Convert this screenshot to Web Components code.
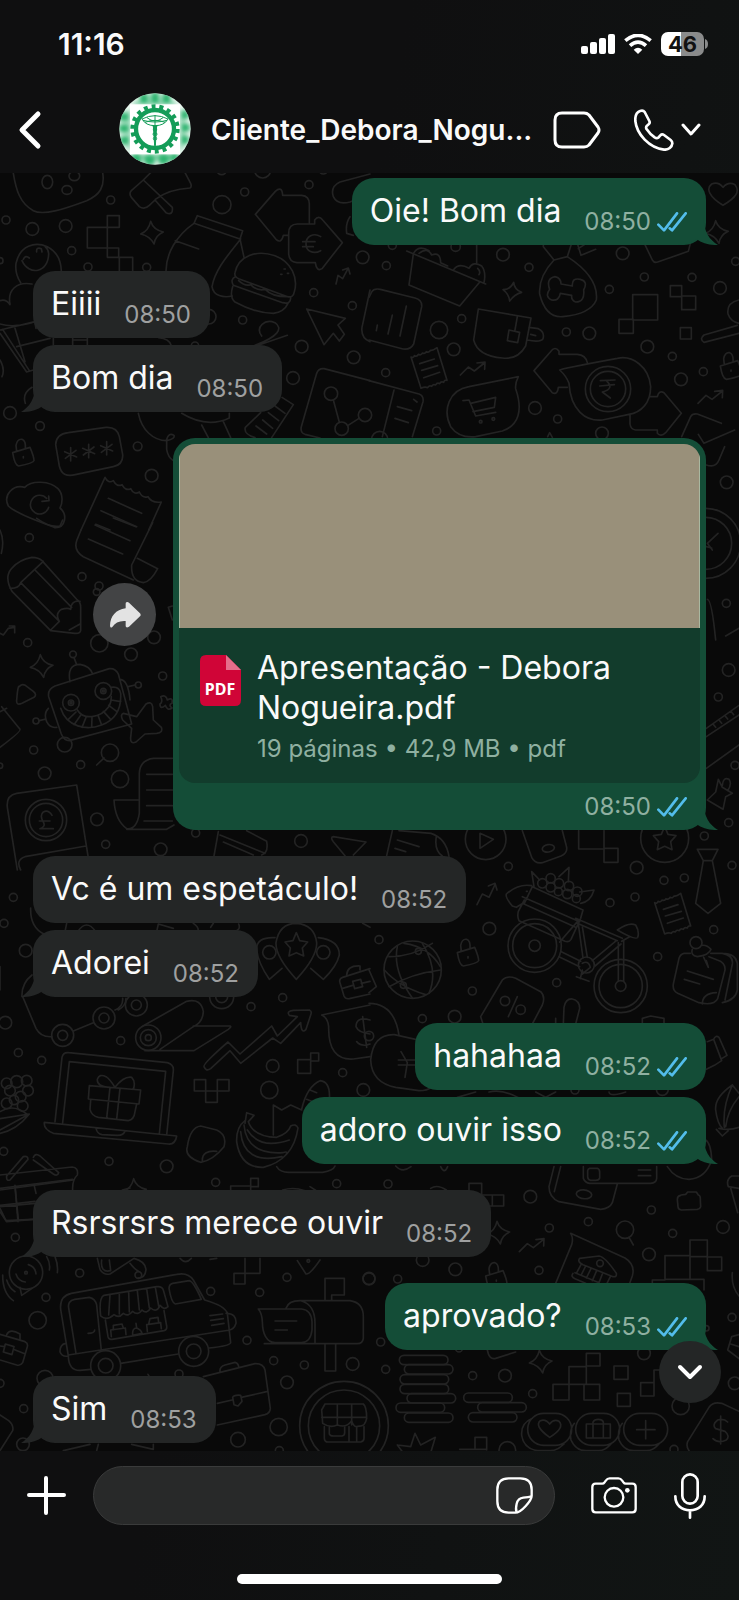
<!DOCTYPE html>
<html lang="pt-BR">
<head>
<meta charset="utf-8">
<meta name="viewport" content="width=device-width, initial-scale=1">
<title>Cliente_Debora_Nogueira</title>
<style>
  body {
    margin: 0;
    background: #090909;
    color: #fafafa;
    font-family: Inter, "Liberation Sans", sans-serif;
  }
</style>
</head>
<body>
<chat-screen>
  <status-bar slot="top" time="11:16" battery="46"></status-bar>
  <chat-header slot="top">Cliente_Debora_Nogu...</chat-header>

  <chat-message out tail time="08:50">Oie! Bom dia</chat-message>
  <chat-message first time="08:50">Eiiii</chat-message>
  <chat-message tail time="08:50">Bom dia</chat-message>
  <chat-document first time="08:50" info="19 páginas • 42,9 MB • pdf">Apresentação - Debora Nogueira.pdf</chat-document>
  <chat-message first time="08:52">Vc é um espetáculo!</chat-message>
  <chat-message tail time="08:52">Adorei</chat-message>
  <chat-message first out time="08:52">hahahaa</chat-message>
  <chat-message out tail time="08:52">adoro ouvir isso</chat-message>
  <chat-message first tail time="08:52">Rsrsrsrs merece ouvir</chat-message>
  <chat-message first out tail time="08:53">aprovado?</chat-message>
  <chat-message first tail time="08:53">Sim</chat-message>

  <chat-composer slot="bottom"></chat-composer>
</chat-screen>

<script>
// shared pieces
const resetButton = `
  button {
    display: flex;
    align-items: center;
    justify-content: center;
    margin: 0;
    padding: 0;
    border: 0;
    background: none;
    color: inherit;
    cursor: pointer;
  }
  svg { display: block; }
`

const ticks = `
  <svg width="30" height="20" viewBox="0 0 90 60" fill="none" stroke="#53bdeb" stroke-width="8" stroke-linecap="round" stroke-linejoin="round" role="img" aria-label="Lida">
    <path d="M4 38L21 55 60 4M38 49L45 55 86 4"/>
  </svg>`

const tail = `
  <svg class="tail" width="40" height="28" viewBox="0 0 120 85" preserveAspectRatio="none" fill="currentColor" aria-hidden="true">
    <path d="M77 0C77 45 95 70 120 85C95 86 72 80 55 67C40 79 22 85 0 85V0Z"/>
  </svg>`

class ChatScreen extends HTMLElement {
  constructor() {
    super()
    this.attachShadow({ mode: "open" })
    this.shadowRoot.innerHTML = `
      <style>
        :host {
          display: flex;
          flex-direction: column;
          min-height: 100vh;
          background: linear-gradient(100deg, #0f0f10 40%, #111514);
        }
        main {
          position: relative;
          flex: 1;
          background: #090909;
        }
        section {
          position: relative;
          display: flex;
          flex-direction: column;
          padding: 5px 33px 8px;
        }
        ${resetButton}
        /* floats over the last messages */
        .down {
          position: absolute;
          right: 18px;
          bottom: 48px;
          width: 62px;
          height: 62px;
          border-radius: 50%;
          background: #242626;
        }
      </style>
      <slot name="top"></slot>
      <main>
        <chat-wallpaper></chat-wallpaper>
        <section><slot></slot></section>
        <button class="down" aria-label="Ir para o fim">
          <svg width="26" height="16" viewBox="0 0 26 16" fill="none" stroke="#fff" stroke-width="4" stroke-linecap="round" stroke-linejoin="round"><path d="M3 3L13 13 23 3"/></svg>
        </button>
      </main>
      <slot name="bottom"></slot>
    `
  }
}

class StatusBar extends HTMLElement {
  constructor() {
    super()
    this.attachShadow({ mode: "open" })
    this.shadowRoot.innerHTML = `
      <style>
        :host {
          display: flex;
          align-items: center;
          justify-content: space-between;
          height: 84px;
          padding: 2px 31px 0 58px;
          font-size: 30px;
          font-weight: 600;
        }
        .icons { display: flex; align-items: center; gap: 9px; }
        .battery { display: flex; align-items: center; gap: 1px; }
        .level {
          width: 43px;
          border-radius: 7px;
          background: linear-gradient(90deg, #fff 46%, #8a8b8b 46%);
          color: #111;
          font-size: 22px;
          line-height: 24px;
          font-weight: 700;
          text-align: center;
        }
      </style>
      <span>${this.getAttribute("time")}</span>
      <div class="icons">
        <svg width="34" height="20" viewBox="0 0 34 20" fill="#fff" aria-hidden="true">
          <rect y="12" width="7" height="8" rx="2"/><rect x="9" y="8" width="7" height="12" rx="2"/><rect x="18" y="4" width="7" height="16" rx="2"/><rect x="27" width="7" height="20" rx="2"/>
        </svg>
        <svg width="28" height="20" viewBox="0 0 84 60" fill="none" stroke="#fff" stroke-width="11" aria-hidden="true">
          <path d="M4 20Q42 -12 80 20M18 35Q42 14 66 35"/>
          <path d="M42 60L29 47Q42 36 55 47Z" fill="#fff" stroke="none"/>
        </svg>
        <div class="battery">
          <div class="level">${this.getAttribute("battery")}</div>
          <svg width="3" height="10" viewBox="0 0 3 10" fill="#8a8b8b" aria-hidden="true"><path d="M0 0Q3 1 3 5Q3 9 0 10Z"/></svg>
        </div>
      </div>
    `
  }
}

class ChatHeader extends HTMLElement {
  constructor() {
    super()
    this.attachShadow({ mode: "open" })
    this.shadowRoot.innerHTML = `
      <style>
        :host {
          display: flex;
          align-items: center;
          height: 87px;
          padding: 0 38px 0 18px;
        }
        ${resetButton}
        .avatar { margin: 0 20px 2px 77px; }
        h1 {
          flex: 1;
          margin: 0;
          overflow: hidden;
          white-space: nowrap;
          font-size: 28px;
          line-height: 36px;
          font-weight: 600;
        }
        .label { margin-right: 33px; }
        .call { gap: 7px; }
      </style>
      <button aria-label="Voltar">
        <svg width="24" height="40" viewBox="0 0 24 40" fill="none" stroke="#fff" stroke-width="5" stroke-linecap="round" stroke-linejoin="round"><path d="M20 4L4 20 20 36"/></svg>
      </button>
      <svg class="avatar" width="72" height="72" viewBox="0 0 216 216" role="img" aria-label="Foto do contato">
        <defs>
          <clipPath id="round"><circle cx="108" cy="108" r="107"/></clipPath>
          <filter id="soft"><feGaussianBlur stdDeviation="6"/></filter>
        </defs>
        <g clip-path="url(#round)">
          <rect width="216" height="216" fill="#eef8f2"/>
          <g fill="#2fb46f" filter="url(#soft)">
            <ellipse cx="75" cy="16" rx="14" ry="17"/><ellipse cx="108" cy="14" rx="14" ry="18"/><ellipse cx="142" cy="16" rx="14" ry="17"/>
            <ellipse cx="52" cy="200" rx="16" ry="20"/><ellipse cx="92" cy="200" rx="18" ry="18"/><ellipse cx="134" cy="198" rx="18" ry="18"/><ellipse cx="166" cy="194" rx="12" ry="16"/>
            <ellipse cx="14" cy="72" rx="15" ry="14"/><ellipse cx="14" cy="106" rx="15" ry="14"/><ellipse cx="16" cy="142" rx="15" ry="14"/>
            <ellipse cx="198" cy="66" rx="13" ry="14"/><ellipse cx="200" cy="104" rx="13" ry="14"/><ellipse cx="198" cy="140" rx="13" ry="14"/>
            <path d="M44 27H170V33H44ZM36 186H180V192H36ZM26 50H31V170H26ZM186 50H191V170H186Z"/>
          </g>
          <rect x="33" y="34" width="150" height="150" fill="#fff"/>
          <circle cx="108" cy="108" r="57" fill="none" stroke="#149c58" stroke-width="13"/>
          <circle cx="108" cy="108" r="67" fill="none" stroke="#149c58" stroke-width="14" pathLength="180" stroke-dasharray="5 5"/>
          <g fill="none" stroke="#149c58" stroke-width="3">
            <path d="M69 78Q108 58 147 78Q136 98 108 98Q80 98 69 78ZM72 82Q108 92 144 82M78 88Q108 76 138 88M84 74Q108 94 132 74"/>
            <path d="M108 66V158M100 98Q122 108 108 116Q96 124 108 130Q118 136 108 144M116 98Q94 108 108 116Q120 124 108 130Q98 136 108 144" />
            <path d="M103 98H113L109 158H107Z" fill="#149c58"/>
          </g>
        </g>
      </svg>
      <h1><slot></slot></h1>
      <button class="label" aria-label="Etiqueta">
        <svg width="48" height="38" viewBox="0 0 48 38" fill="none" stroke="#fff" stroke-width="3" stroke-linejoin="round"><path d="M9 2H31Q34 2 36 4L45 16Q47 19 45 22L36 34Q34 36 31 36H9Q2 36 2 29V9Q2 2 9 2Z"/></svg>
      </button>
      <button class="call" aria-label="Ligar">
        <svg width="40" height="42" viewBox="0 0 120 126" fill="none" stroke="#fff" stroke-width="8" stroke-linecap="round" stroke-linejoin="round">
          <path d="M18 6C8 10 3 22 4 36C8 76 46 116 90 122C104 123 114 114 115 103Q115 97 110 93L90 78Q84 74 79 79L73 86Q68 89 62 85C52 78 43 68 37 59Q35 54 39 50L44 46Q49 42 46 36L32 9Q27 2 18 6Z"/>
        </svg>
        <svg width="20" height="13" viewBox="0 0 20 13" fill="none" stroke="#fff" stroke-width="3" stroke-linecap="round" stroke-linejoin="round"><path d="M2 2L10 11 18 2"/></svg>
      </button>
    `
  }
}

class ChatMessage extends HTMLElement {
  constructor() {
    super()
    this.attachShadow({ mode: "open" })
    const out = this.hasAttribute("out")
    this.shadowRoot.innerHTML = `
      <style>
        :host { display: flex; margin-top: 7px; }
        :host(:first-of-type) { margin-top: 0; }
        :host([first]) { margin-top: 26px; }
        :host([out]) { justify-content: flex-end; }
        .bubble {
          position: relative;
          display: flex;
          align-items: flex-end;
          gap: 23px;
          padding: 13px 19px 9px 18px;
          border-radius: 22px;
          background: #242626;
        }
        :host([out]) .bubble { background: #144d37; }
        .text {
          position: relative;
          margin-bottom: 5px;
          font-size: 32px;
          line-height: 40px;
        }
        .meta {
          position: relative;
          display: flex;
          align-items: center;
          gap: 6px;
          color: #9fa0a0;
          font-size: 24px;
          line-height: 28px;
        }
        :host([out]) .meta { color: #8fb0a1; }
        .tail {
          position: absolute;
          left: -12px;
          bottom: 0;
          color: #242626;
          transform: scaleX(-1);
        }
        :host([out]) .tail {
          left: auto;
          right: -12px;
          color: #144d37;
          transform: none;
        }
      </style>
      <div class="bubble">
        ${this.hasAttribute("tail") ? tail : ""}
        <span class="text"><slot></slot></span>
        <span class="meta"><time>${this.getAttribute("time")}</time>${out ? ticks : ""}</span>
      </div>
    `
  }
}

class ChatDocument extends HTMLElement {
  constructor() {
    super()
    this.attachShadow({ mode: "open" })
    this.shadowRoot.innerHTML = `
      <style>
        :host {
          display: flex;
          align-items: center;
          justify-content: flex-end;
          gap: 17px;
          margin-top: 26px;
        }
        ${resetButton}
        .forward {
          flex: none;
          width: 63px;
          height: 63px;
          margin-bottom: 39px;
          border-radius: 50%;
          background: #434445;
        }
        .bubble {
          position: relative;
          flex: 0 1 521px;
          padding: 6px;
          border-radius: 22px;
          background: #144d37;
        }
        .card {
          overflow: hidden;
          border-radius: 16px;
          background: #123c2c;
        }
        .preview {
          height: 184px;
          border: solid #a9b8a0;
          border-width: 0 1px;
          background: #99907a;
        }
        .file {
          display: flex;
          gap: 16px;
          padding: 20px 20px 20px 21px;
        }
        .file svg { flex: none; margin-top: 7px; }
        h2 {
          margin: 0;
          font-size: 32px;
          line-height: 40px;
          font-weight: 400;
        }
        p, .meta {
          margin: 0;
          color: #8fb0a1;
          font-size: 24px;
          line-height: 28px;
        }
        p { margin-top: 7px; }
        .meta {
          position: relative;
          display: flex;
          align-items: center;
          justify-content: flex-end;
          gap: 6px;
          padding: 10px 13px 3px;
        }
        .tail {
          position: absolute;
          right: -12px;
          bottom: 0;
          color: #144d37;
        }
      </style>
      <button class="forward" aria-label="Encaminhar">
        <svg width="32" height="28" viewBox="0 0 96 84" fill="#e3e3e3"><path d="M52 4Q56 2 60 5L93 37Q97 42 93 46L60 77Q52 82 50 76V60Q22 58 10 78Q4 83 3 74C4 46 20 26 50 22V8Q50 5 52 4Z"/></svg>
      </button>
      <div class="bubble">
        ${tail}
        <div class="card">
          <div class="preview"></div>
          <div class="file">
            <svg width="41" height="51" viewBox="0 0 41 51" role="img" aria-label="PDF">
              <path d="M6 0H26L41 15V45Q41 51 35 51H6Q0 51 0 45V6Q0 0 6 0Z" fill="#d00537"/>
              <path d="M26 0L41 15H26Z" fill="#e56e8b"/>
              <text x="20" y="40" fill="#fff" font-family="Noto Sans, sans-serif" font-size="16" font-weight="700" text-anchor="middle">PDF</text>
            </svg>
            <div>
              <h2><slot></slot></h2>
              <p>${this.getAttribute("info")}</p>
            </div>
          </div>
        </div>
        <div class="meta"><time>${this.getAttribute("time")}</time>${ticks}</div>
      </div>
    `
  }
}

class ChatComposer extends HTMLElement {
  constructor() {
    super()
    this.attachShadow({ mode: "open" })
    this.shadowRoot.innerHTML = `
      <style>
        :host { display: block; padding: 15px 0 16px; }
        ${resetButton}
        form {
          display: flex;
          align-items: center;
          padding: 0 33px 0 26px;
        }
        .field {
          display: flex;
          flex: 1;
          align-items: center;
          min-width: 0;
          height: 57px;
          margin: 0 36px 0 26px;
          padding: 0 21px 0 24px;
          border: 1px solid #3a3b3b;
          border-radius: 30px;
          background: #282929;
        }
        input {
          flex: 1;
          min-width: 0;
          padding: 0;
          border: 0;
          outline: 0;
          background: none;
          color: inherit;
          font: 32px Inter, sans-serif;
        }
        .camera { margin-right: 37px; }
        .home {
          width: 265px;
          height: 10px;
          margin: 49px auto 0;
          border-radius: 5px;
          background: #fff;
        }
      </style>
      <form>
        <button type="button" aria-label="Anexar">
          <svg width="41" height="41" viewBox="0 0 41 41" fill="none" stroke="#fff" stroke-width="4" stroke-linecap="round"><path d="M20 3V38M3 20H38"/></svg>
        </button>
        <div class="field">
          <input type="text" aria-label="Mensagem">
          <button type="button" aria-label="Figurinhas">
            <svg width="37" height="37" viewBox="0 0 111 111" fill="none" stroke="#fff" stroke-width="7" stroke-linejoin="round">
              <path d="M38 4H73Q107 4 107 38V56C107 70 76 107 58 107H38Q4 107 4 73V38Q4 4 38 4Z"/>
              <path d="M62 106Q58 96 62 80Q66 64 82 62Q98 60 107 58"/>
            </svg>
          </button>
        </div>
        <button type="button" class="camera" aria-label="Câmera">
          <svg width="46" height="37" viewBox="0 0 138 111" fill="none" stroke="#fff" stroke-width="7" stroke-linejoin="round">
            <path d="M14 20H34Q38 20 40 17L45 10Q49 4 56 4H82Q89 4 93 10L98 17Q100 20 104 20H124Q134 20 134 30V96Q134 106 124 106H14Q4 106 4 96V30Q4 20 14 20Z"/>
            <circle cx="69" cy="61" r="28"/><circle cx="109" cy="40" r="7" fill="#fff" stroke="none"/>
          </svg>
        </button>
        <button type="button" aria-label="Gravar áudio">
          <svg width="32" height="46" viewBox="0 0 96 138" fill="none" stroke="#fff" stroke-width="8" stroke-linecap="round">
            <rect x="25" y="4" width="46" height="88" rx="23"/><path d="M4 70C4 96 22 112 48 112S92 96 92 70M48 112V134"/>
          </svg>
        </button>
      </form>
      <div class="home"></div>
    `
  }
}

// Wallpaper doodles, drawn at three units per pixel.
// Each sheet: origin, circles [x, y, r], free paths, reusable stamps [name, x, y]
const sheets = [
  {
    at: [0, 510],
    circles: [[332,90,12],[734,66,12],[927,44,12],[666,104,27],[18,150,12],[97,177,19],[197,168,19],[215,242,12],[264,291,12],[440,292,12],[1088,262,19],[941,368,12],[1057,407,12],[728,450,12],[905,530,19],[1061,562,19],[879,624,19],[30,729,19],[120,768,13],[413,829,13],[455,917,19],[788,0,24],[0,272,9],[585,527,11],[993,671,20],[1025,776,20],[1095,735,20],[665,0,14],[970,0,12],[626,440,22]],
    stamps: [["sparkle",456,188],["ast",212,853],["ast",266,843],["ast",320,835],["lock",70,850]],
    paths: `M40 10C48 60 60 100 100 122C130 138 190 118 260 92C300 75 315 50 308 8M126 36a16 20 0 1 0 32 0a16 20 0 1 0 -32 0M186 60a15 13 0 1 0 30 0a15 13 0 1 0 -30 0M207 18a16 14 0 1 0 32 0a16 14 0 1 0 -32 0
      M430 30L394 62Q386 70 394 82L418 110Q434 120 448 106L465 90 498 128Q520 138 517 112L430 30 452 8M466 88C500 62 535 56 570 54Q576 50 572 40L555 8
      M262 172H322V234H262ZM322 137H358V172H322ZM322 172V262H356V234H322M356 262H398V303M358 262V303
      M592 137L728 182 720 207 582 160ZM582 160C530 196 498 250 498 303M526 212L596 237M720 207L732 262M722 207C680 260 645 300 636 350C640 378 670 384 697 378
      M705 308C715 258 770 238 825 257C875 275 895 325 883 365Q880 384 863 380L716 326Q702 320 705 308ZM706 320Q690 328 700 346L848 398Q872 404 872 384M698 350Q688 382 705 396C745 418 785 430 820 430Q852 426 864 400M716 332Q735 350 752 344Q770 364 796 358Q815 380 862 380M842 313h4M852 297h4M862 310h4
      M766 133L826 64Q846 46 848 76H905Q928 78 928 102V158M766 133L828 208Q844 222 850 196H864M866 190Q866 162 892 162H944V150Q956 134 968 150L1027 218 966 296Q950 306 946 278H890Q868 276 866 252ZM962 200C940 186 918 200 918 222S940 254 962 242M908 215H945M908 230H940
      M1008 342L1014 316 1028 326 1044 296M1028 300L1045 294 1050 312
      M920 417L1036 445 1014 465 1033 493 1018 513 1000 490 972 524Z
      M1110 360L1086 472Q1082 504 1110 515M1110 12L1020 36Q990 50 1000 80Q1012 106 1050 96L1070 88M1050 140Q1036 160 1040 190L1060 196
      M785 498C765 470 795 446 825 458C850 475 835 500 765 526M768 528L862 496
      M1110 632L972 596Q956 594 950 610L904 770Q900 788 915 793L960 804M1000 690L1018 757M1043 767L1077 745
      M62 338Q44 310 48 280C60 226 105 214 142 230Q182 250 184 303M66 272C86 318 146 310 146 250Q144 236 134 228M70 268q6 -14 18 -4M110 246q-2 -16 14 -10l2 10M30 402C22 360 50 334 96 342M0 392Q18 386 30 404M0 462Q40 474 96 458
      M8 478L88 602M0 490L80 606 100 600M50 530L150 505M45 475L75 575M0 480L105 455M104 455L108 475M160 505V525M218 503V527M262 503V527M218 510H262M476 503Q508 506 514 527
      M0 570Q16 598 6 620M76 700Q66 670 96 652
      M205 788L318 772Q352 770 358 800L368 854Q370 884 340 890L226 914Q186 924 178 888L167 824Q168 792 205 788Z
      M415 730C425 780 460 812 500 812Q526 806 522 796Q506 786 500 808V838Q504 862 520 872M545 730Q620 776 688 744V730M605 765L625 803M670 755L692 803
      M782 728L736 772Q730 792 765 803M846 682L880 704 815 803M768 768L800 792M788 750L818 775M805 728L836 752M825 708L855 730
      M25 1008C8 975 40 942 74 952C95 930 150 932 174 956C190 972 188 1000 180 1014C204 1034 196 1074 165 1073C125 1056 55 1036 25 1008ZM140 985A28 28 0 1 0 146 1012M126 994L147 992 146 978
      M243 1080L315 922Q325 942 340 932Q350 952 366 944Q376 964 392 956Q402 976 418 966Q428 986 444 980Q454 1000 484 996L446 1080M325 985L425 1030M303 1022L410 1070M287 1063L330 1080`
  },
  {
    at: [0, 1560],
    circles: [[88,53,12],[246,170,12],[83,368,12],[298,370,26],[393,403,19],[462,352,19],[488,468,12],[194,674,22],[330,698,26],[101,690,12],[242,734,12],[134,760,19],[360,777,26],[291,898,19],[317,973,12],[482,988,19],[587,939,12],[903,963,19],[219,403,10],[415,495,9],[108,603,9],[0,737,8],[213,548,25],[213,548,8],[213,548,3],[310,513,25],[310,513,8],[310,513,3],[138,900,62],[138,900,50],[297,198,12],[290,216,10]],
    stamps: [["sparkle",125,438],["flower",498,546]],
    paths: `M243 30L230 62Q220 92 250 110L400 180M458 8L395 135Q392 184 430 188Q452 186 473 146L412 115M285 15L390 62M265 57L368 102M340 -6L408 20M0 30Q14 60 4 100M110 -5Q150 24 180 18L188 0
      M36 214Q12 172 34 146Q58 118 96 112Q116 112 126 122L232 240Q242 246 242 262V332Q240 342 224 340L152 332ZM30 205Q56 206 62 188L130 124M62 188L178 304M105 150L215 262M152 330L178 304Q164 282 184 268Q204 262 212 268Q214 240 240 244M208 330L240 312
      M0 340L10 345 25 325 42 322M28 318H44V338
      M58 500Q54 492 50 540Q48 558 66 550L102 532Q112 524 100 514L76 496Q64 490 58 500ZM5 560L60 628Q64 634 0 682M0 575L20 565
      M165 498L328 446Q346 444 355 462L395 612 208 662Q192 662 184 642L146 530Q142 508 165 498ZM210 485Q200 434 240 433Q270 438 278 462M222 413L230 434M145 565Q130 580 140 605Q150 625 170 622M118 602L138 597M360 478Q385 480 390 540M405 495L385 500
      M182 565C200 622 260 632 305 615Q366 592 362 520Q358 498 334 502M232 570C250 600 300 596 326 560Q334 548 334 530M205 598L228 576M222 614L242 586M246 622L258 592M275 622L276 592M305 615L294 586M332 598L310 574M350 574L326 556M362 545L334 540
      M370 580L410 590 438 552Q455 542 458 560L460 600 484 622Q490 638 470 640L435 642 408 666Q390 674 392 652L395 625 368 600Q360 584 370 580Z
      M312 714L290 735M517 715H460Q420 720 418 760V880Q410 930 380 926Q345 900 342 840H415M380 928H500L522 915M440 763H517M440 810H517M440 857H517M432 903H517M505 262L517 300M505 262L517 258
      M22 862Q18 826 50 820L230 795 264 1008M22 862L52 1050M62 1050Q46 1020 75 1010L258 978M156 886Q145 868 130 876Q118 886 130 906Q138 920 120 926H160M118 903H150
      M655 935L642 1008M660 945L795 1000M670 966L760 1005M740 932L800 964Q806 998 785 1005M1000 950L1098 966 1060 1005M1000 950Q990 952 1000 965L1035 1007`
  },
  {
    at: [1107, 720],
    circles: [[52,77,12],[402,44,19],[480,82,12],[761,40,19],[826,111,12],[969,112,12],[721,148,12],[1053,144,19],[1100,64,12],[278,236,12],[210,270,26],[254,328,19],[592,276,12],[661,280,19],[835,320,19],[910,349,12],[936,418,19],[1003,395,12],[50,398,12],[498,504,19],[566,537,12],[203,573,12],[699,580,19],[1073,727,19],[1072,1090,12],[717,447,68],[717,447,53],[335,545,4],[373,537,4],[1010,910,105],[1010,910,78],[32,598,24],[70,16,12],[260,20,14]],
    stamps: [["sparkleS",430,155],["receipt",180,385],["trend",310,386],["trend",1023,471],["lock",1086,380],["heart",1062,-136],["sparkle",1044,-24]],
    paths: `M113 33L350 132M133 42L120 135 272 198 333 125M135 38Q150 14 180 32M150 40Q175 20 188 45Q214 34 215 68L236 78M255 88Q270 68 300 85Q312 62 338 78Q352 96 345 128M323 10V70M326 85Q336 94 330 104
      M0 172L8 156Q14 144 34 148L138 174Q160 180 158 200L134 312Q124 330 102 327L0 300M25 255L22 272M70 225L57 282M112 198L93 288
      M328 207L486 234 470 318Q446 360 400 354Q326 348 314 300ZM445 230L438 270M420 270L452 277 446 308 415 302ZM480 262L508 266Q528 276 522 296Q514 308 475 300M485 283L500 287
      M555 60Q508 110 512 162Q530 235 582 230Q664 222 682 180Q690 112 595 50Q575 55 555 60L523 20V10M595 50L608 10M625 10L636 46 680 28M628 26L652 10
      M576 132L610 138Q608 112 634 118Q658 124 644 150Q648 186 620 186Q606 180 608 166L574 160Q570 184 548 180Q526 170 542 148Q530 116 558 110Q576 114 576 132Z
      M791 164H866V240H791ZM750 238H793V280H750ZM904 137H938V170H904ZM938 168H980V209H938ZM934 263H967V297H934Z
      M655 368Q650 345 625 343H570V334Q558 316 544 336L495 392 550 458Q566 466 568 442H595M572 390Q576 386 745 355C790 345 840 380 845 440C845 490 815 518 780 523L700 540C650 545 605 510 600 430Q592 408 572 390ZM783 525V552Q785 568 800 570H865V580Q875 592 890 578L937 520 885 458Q870 450 865 470H845M694 422L738 420M692 438L736 434M712 422Q738 446 700 456L724 474
      M448 410L300 440C240 450 220 510 245 560Q270 595 320 590L400 573C450 556 462 510 440 446Q438 430 448 410ZM282 482L300 480 320 528 380 517M305 490L380 472 376 502 312 515
      M0 422L150 462Q165 468 162 485L130 590M75 450L40 590M85 500L128 512M78 535L118 548M134 478l10 8M536 590L542 578 550 592
      M1110 180Q1072 188 1077 222Q1085 245 1110 250M1105 256L1005 285Q990 297 1005 307L1110 280M938 590L965 530Q970 520 985 522L1057 550M988 583L1005 610 1097 570M1012 675Q1040 685 1050 660L1067 620
      M1047 880L1015 910 1030 930M1012 920L1028 924M1015 1078Q1028 1078 1040 1200M1070 1188L1110 1165
      M826 10L850 60Q856 70 866 66L958 34 964 10`
  },
  {
    at: [1107, 1860],
    circles: [[1079,150,19],[1048,231,12],[1098,436,12],[1079,608,12],[1006,648,12],[1089,736,12],[803,743,19],[885,781,12],[946,774,12],[798,831,12],[723,848,12],[418,739,12],[361,926,19],[30,959,12],[866,1010,12],[1034,929,12],[310,1113,12],[563,1088,12],[160,1196,12],[257,1190,19],[887,655,72],[350,658,61],[497,977,80],[497,977,66],[497,977,17],[755,1098,80],[755,1098,65],[755,1098,16],[652,1035,24],[131,1049,86],[148,994,9],[103,1096,9],[408,1143,14],[455,1169,14],[981,968,18],[545,775,14],[520,790,14],[570,790,14],[545,802,14],[600,798,14],[625,815,14],[595,822,14],[622,836,12],[568,815,12]],
    stamps: [["star",887,655],["receipt",911,882],["lock",297,1000],["trendUp",352,822]],
    paths: `M1012 325L1110 256M1012 350L1110 285M1012 445L1110 375M1032 312l8 10M1050 300l8 10M1068 287l8 10M1086 274l8 10
      M1015 540L1062 568Q1068 540 1070 530L1090 520 1060 502 1048 478 1040 516 1015 540M1060 496Q1062 470 1080 478Q1090 492 1076 512M333 640V685L373 658Z
      M70 632L53 707M90 632L186 640Q232 655 240 710M85 660L150 680M78 685L110 695M202 650Q195 690 220 708
      M460 632L488 712Q498 732 520 728L576 708Q598 698 592 678L580 632M520 688a18 11 -10 1 0 36 -6a18 11 -10 1 0 -36 6M629 632V687H705M705 632V727H747V685H705
      M985 688H1047L1030 722H1003ZM1003 722L980 850 1017 880 1055 850 1030 722
      M572 966L625 905M577 995L635 1024M570 1010L632 1040M620 895L760 955M625 910L745 962M748 968V1084M764 960V1084M640 920L655 1012M628 912L642 1014M742 962L670 1022M756 972L678 1038M640 1030Q660 1020 664 1042L640 1062M622 1070L660 1084M640 1050L634 1076
      M745 930Q780 905 800 915Q812 935 806 952Q800 962 745 930ZM782 950L758 964M490 800L642 870 635 895 606 958Q600 968 588 964L450 902Q444 890 448 874L466 840M460 830L632 905M460 850L620 922M490 800L466 850M488 797Q448 790 412 822Q408 832 430 858L442 862 468 846M472 814h3M495 800L488 755 512 780M570 770L600 742 598 785M632 816L675 810Q665 845 635 850
      M60 1010Q130 1010 190 970M60 1100Q130 1060 215 1050M85 980Q70 1050 130 1134M160 970Q210 1050 180 1120M46 1050Q90 1100 170 1124M105 970Q180 980 214 1040
      M335 1190L400 1080Q415 1065 440 1075L515 1115Q530 1130 520 1155L490 1212M335 1190L342 1212M445 1130L418 1190
      M964 1000H945Q934 1002 930 1015L913 1092Q910 1112 926 1120L990 1148Q1035 1158 1046 1136L1068 1050Q1070 1028 1045 1020L1020 1010M1025 1000H1060Q1094 1006 1090 1032L1068 1140M1060 1148Q1100 1140 1105 1110V1030Q1100 1000 1060 1000M955 1053L1033 1078M946 1078L992 1092M1000 1152Q1000 1120 1042 1118M970 988Q964 1006 985 1010Q1020 1006 1026 988Q1014 974 998 976M1004 1012L1018 1042 1012 1022
      M583 1212L585 1162Q590 1135 610 1137Q632 1142 632 1165L620 1212M560 1195V1212M820 1212V1195L845 1188 885 1195V1212M0 1150Q76 1150 90 1246M0 1050L22 1100 0 1118`
  },
  {
    at: [0, 2520],
    circles: [[40,172,12],[12,250,12],[77,332,19],[16,548,19],[55,638,12],[125,661,12],[362,602,12],[753,500,12],[848,473,12],[818,678,19],[808,750,26],[1028,698,12],[1090,750,19],[11,934,12],[327,964,12],[500,979,19],[647,1027,12],[1010,1031,12],[188,586,33],[188,586,15],[312,534,33],[312,534,15],[409,495,33],[409,495,15],[665,470,36],[665,470,18],[445,593,38],[445,593,24],[445,593,9],[808,337,20],[970,337,20],[50,725,18],[80,722,16],[20,730,16],[30,752,16],[84,752,16],[62,770,16],[20,790,16],[68,798,16],[42,780,14]],
    stamps: [["star",889,314],["sparkle",405,1050]],
    paths: `M66 470Q64 430 96 405M68 470L108 565Q122 592 155 590M220 573L280 548M345 510Q370 500 368 475M355 510Q378 498 378 475
      M425 560L560 484Q604 474 610 515Q608 548 580 560L480 628M580 558H690Q696 560 685 568L582 632H435
      M612 680Q608 672 684 606L720 642 815 558 832 588 892 530 868 526Q858 514 880 511L928 510Q936 514 933 522L918 568Q904 584 902 548L842 610 818 594 722 670 690 632 632 686Q618 696 612 680Z
      M965 525L1110 495M965 525Q984 534 986 560Q984 662 1060 657L1110 650M1110 540Q1068 528 1068 560Q1075 578 1110 582M1070 605Q1085 622 1110 612M1088 530L1100 622
      M889 418Q826 350 828 308Q838 250 889 250Q944 254 950 308Q952 350 889 418ZM825 293Q768 290 770 330Q775 370 808 418L846 385M955 293Q1018 300 1018 345Q1010 380 970 418L932 385
      M1110 386L1028 412Q1016 416 1020 428L1032 468Q1036 478 1048 476L1110 462M1028 445L1058 436M1084 430L1110 424M1040 405Q1042 376 1080 378V390M1058 424l24 -6 6 22 -24 6z
      M165 845L186 652Q190 636 206 638L502 668Q522 674 520 692L500 885M188 848L208 665 497 694 478 882M133 847L530 888Q526 914 505 912L160 880Q130 868 133 847ZM288 865Q292 882 306 884L352 886Q372 886 375 873
      M268 737L422 750 417 792 265 777ZM330 742L320 835M360 745L350 838M272 780L270 808Q275 828 295 832L385 842Q402 840 405 815L410 792M330 742Q290 740 292 718Q298 700 318 710Q330 718 345 742Q372 708 395 712Q408 725 400 748
      M583 719H617V753H583ZM652 719H687V753H652ZM617 753H652V787H617ZM893 659H932V700H893ZM932 639H956V663H932Z
      M602 858L650 870Q682 884 672 920Q640 960 602 967Q552 950 562 920Q570 862 602 858ZM607 962Q606 930 650 934
      M735 850L740 818 762 826 745 845Q760 890 830 892Q865 880 872 858Q888 850 894 864Q880 960 790 982Q722 984 710 906Q708 862 735 842M732 855Q740 945 848 938Q866 932 858 944M722 875Q730 975 846 950M742 870Q780 930 868 900
      M905 808Q920 740 960 722Q992 725 988 778M820 885V795L845 810 872 795 905 810M930 750l20 8M920 778l20 8M830 980Q840 998 870 997H968Q1000 992 1005 978
      M0 1005L216 981Q236 982 232 1005Q216 1020 218 1052M0 1045L218 1018M20 1008L70 950Q84 946 84 958L30 1020Q18 1024 20 1008M100 952Q106 938 120 948L176 998Q172 1010 160 1002L100 960M45 1040L54 1145M102 1034L108 1060M0 1100L105 1090M0 1115L20 1145 100 1138
      M0 836L88 822Q50 870 0 880M0 870L84 824M0 815Q40 790 80 822
      M692 1053V1038H752V1015H775V1040H752V1053M848 1050Q880 1040 915 1052M930 1040L950 1053M367 1050L390 1044
      M92 204Q90 262 132 282M200 250L195 275M235 272Q260 238 285 272M470 275L475 252 520 265M580 250Q598 262 594 275M632 262L640 250M716 252Q724 270 700 275M0 380V450M1088 250L1110 262`
  },
  {
    at: [0, 3540],
    circles: [[46,172,12],[239,279,12],[138,352,12],[113,421,26],[632,334,12],[779,337,12],[861,292,12],[741,481,12],[821,542,12],[913,555,12],[1058,552,19],[861,607,19],[836,741,26],[714,779,22],[71,686,12],[69,793,19],[135,595,24],[0,610,12],[537,582,12],[1107,297,18],[838,812,12],[78,278,50],[78,278,4],[317,557,45],[317,557,22],[581,514,45],[581,514,22],[1032,737,133],[1032,737,107],[925,243,4],[415,285,10]],
    stamps: [],
    paths: `M60 322L65 346 96 325M8 285Q8 340 40 362M20 300Q28 325 45 335M140 230Q152 250 148 270M165 230Q175 255 172 278M48 282Q55 304 76 306M85 254Q106 260 108 282
      M272 568L240 571Q206 572 205 528L182 388Q178 348 214 340L530 283Q564 276 580 300L614 360Q676 378 682 400L692 488Q690 498 628 504M205 525L690 450M362 550L535 522M224 358L268 352Q286 356 290 375L304 512M224 358Q202 362 206 384L228 520M264 460Q284 460 284 450
      M518 310L568 302Q580 304 604 358L526 372Q514 368 507 325Q508 312 518 310ZM312 346L470 320Q486 318 490 330L504 380Q492 392 480 376Q470 400 452 384Q440 404 426 390Q414 408 398 394Q384 412 370 400Q356 416 342 404Q320 424 302 408Q296 354 312 346ZM330 345L326 405M358 340L358 402M386 336L388 396M412 332L418 390M440 326L448 384M466 322L476 378
      M316 420L324 470Q326 480 336 478L492 452Q502 450 500 438L492 392M334 470L332 450 376 444 378 464M340 450V436L366 432 370 444M398 466Q396 444 410 444Q424 450 426 460ZM410 444L408 430M442 454L440 434 482 428 484 446M446 432L450 416 474 412 476 428
      M630 407L668 402M632 421L670 416M635 436L672 430M678 400Q710 400 708 430Q702 450 686 450M198 490Q180 492 180 515Q186 532 205 528
      M775 387H905Q934 390 936 425V450Q932 486 905 488H825Q788 484 787 425Q786 400 775 387ZM825 423H890M825 450H862M858 385Q865 362 900 362H1050Q1090 368 1090 410V475Q1088 491 1072 491H793M905 363Q945 375 945 430V488M975 360V295H1033V345H995V360M975 493V573H1007V493M735 235V280H702V312H735V280H780V235
      M292 235L300 268Q310 286 330 282L402 235Q436 244 438 268Q436 294 415 294M305 240Q300 280 332 272L328 240M390 250Q404 268 415 274M892 242L918 282Q930 284 960 240M540 235Q556 255 574 235M630 238L650 235
      M0 463L75 485Q85 490 82 500L68 548Q62 558 50 555L0 540M20 464Q30 444 60 462V478M0 498L14 500M40 508L76 522M16 492l26 8 -6 24 -26 -8z
      M610 590L765 551Q790 550 795 570L811 685Q810 700 795 704L652 735M652 670L696 660M724 652L800 635M660 575Q658 560 675 555L705 547Q716 550 716 562M698 652Q702 644 722 646L726 664 714 678 702 674Z
      M975 672H1090Q1100 680 1100 715Q1095 740 1078 738Q1060 745 1055 722Q1040 745 1012 735Q990 745 968 730L965 690ZM965 712H1100M1012 672V735M1055 672V735M973 740V775Q974 786 984 786H1082Q1092 784 1092 775V740M1047 740V784M1070 740V784M988 742V762Q990 768 1000 768H1026Q1034 766 1034 758V742
      M190 812L270 793M295 793L290 812M395 793L460 808V793M0 705L26 722Q42 736 38 752L0 812M444 583L448 590
      M0 30L220 0M0 76L105 64M0 85L18 122 98 118M45 16L55 120`
  },
  {
    at: [1107, 3030],
    circles: [[57,522,12],[484,560,19],[847,600,12],[658,635,12],[541,654,12],[911,670,12],[1062,651,19],[840,733,19],[510,781,12],[259,778,19],[86,807,12],[161,750,19],[768,659,26],[0,805,18],[618,240,12],[880,238,18],[693,760,10],[0,78,14]],
    stamps: [["sparkle",388,668],["trend",487,706],["lock",382,800]],
    paths: `M140 88L76 74Q12 72 5 150Q8 218 80 232L150 242Q176 242 186 232M88 150H138M88 165H138M96 125L115 158 108 202M300 520H338V555H300ZM338 555H404V588H338ZM370 555V588M185 535Q205 522 232 540
      M555 470L540 530Q540 562 570 575L695 598Q722 596 730 578L745 522M575 470L556 545M643 470V505Q648 518 662 520H845Q862 518 863 505V470M662 475H685Q692 478 692 486V504Q690 511 680 511H664Q656 508 656 500V482Q657 476 662 475M808 480H845M808 497H845M622 552a23 13 6 1 0 46 2a23 13 6 1 0 -46 -2M895 470Q920 508 960 508Q1010 505 1028 450Q1026 400 1010 390M1110 498H1088Q1070 510 1078 530L1110 535M1085 535L1106 608
      M936 555L950 553 956 546H982L988 555Q995 556 994 570L995 590Q993 597 985 598L937 600Q927 598 927 590L925 568Q925 558 935 556Z
      M1090 225Q1036 262 1040 300Q1045 340 1060 355M1090 225Q1060 290 1066 352M1090 225L1110 250M1110 260Q1076 300 1070 350M1050 355Q1080 362 1110 352M1042 358L1060 378 1078 362M1015 95L1034 88 1058 152 1036 166 1012 178M1034 88Q1040 74 1050 82L1074 136 1058 146
      M780 682L793 705M605 670Q614 684 608 704L560 820M605 670L768 744Q800 764 790 798L782 820M632 745L690 738Q708 740 742 790Q744 802 732 800L642 764Q624 756 632 745ZM636 764L622 790M650 768L636 796M666 776L652 804M682 784L670 812M700 792L690 818M724 800L714 820M612 790Q604 800 618 806L650 820M618 788L690 818
      M888 737H963V808H888ZM963 690H1015V740H963ZM1015 741H1058V782H1015ZM963 808H1005V840M850 824V810H888M1090 788Q1086 830 1110 858M265 262L320 246M360 246Q400 236 450 264M500 246L530 262 560 246M720 246Q722 262 770 246M80 468Q100 490 126 470M215 470Q226 494 236 470`
  },
  {
    at: [1107, 3810],
    circles: [[35,216,12],[50,298,12],[311,317,12],[408,317,19],[491,371,12],[825,250,19],[1089,142,12],[1097,340,19],[935,408,26],[415,540,25],[915,538,12],[270,236,10],[1012,175,8]],
    stamps: [["sparkle",515,275],["heartS",542,474],["coin",165,270],["coin",180,298],["coin",167,328],["coin",167,357],["coin",188,385],["coin",155,413],["coin",180,443],["coin",358,383],["coin",400,412],["coin",372,442]],
    paths: `M652 250H693V288H652ZM600 290H652V343H600ZM552 343H600V390H552ZM645 343H692V390H645ZM735 288H777V328H735ZM745 370H784V409H745ZM815 338H855V378H815ZM855 338V300H875M355 240Q360 270 380 265L440 246
      M524 430H560A48 48 0 0 1 560 526H524A48 48 0 0 1 524 430ZM668 430H704A48 48 0 0 1 704 526H668A48 48 0 0 1 668 430ZM812 430H848A48 48 0 0 1 848 526H812A48 48 0 0 1 812 430ZM490 445Q455 460 458 496Q464 535 505 542H545Q565 542 585 522M616 460Q600 480 606 510Q620 542 650 542H690Q708 542 726 522M760 460Q744 480 750 510Q764 542 794 542H834Q852 542 870 522
      M652 462H724V504H652ZM672 504V456Q676 448 688 448Q700 448 703 456V504M830 452V506M803 479H858
      M1110 424L1058 400Q1032 394 1020 412L956 515Q950 530 962 545M1076 456Q1064 444 1046 450Q1028 464 1040 476L1068 484Q1084 498 1072 510Q1048 522 1032 506M1055 438V522M85 525L125 530 138 490 155 525 199 502 186 545M85 525L100 545M272 538H318V502H353V540M318 538H353M1110 194L1088 200 1076 240 1110 266M1085 222L1110 230`
  }
]

const stamps = {
  sparkle: "M-4 -34Q4 -8 34 -2Q10 8 6 34Q-6 10 -34 4Q-10 -6 -4 -34Z",
  sparkleS: "M4 -28Q6 -6 28 2Q6 8 -8 28Q-10 8 -28 -6Q-6 -6 4 -28Z",
  ast: "M0 -20V20M-18 -8L18 8M-16 12L16 -12",
  lock: "M-32 -2L20 -18Q32 10 32 22Q30 30 -14 38Q-26 36 -32 -2ZM-20 -6L-22 -24Q-18 -44 -4 -42Q8 -38 6 -14M0 10V14",
  flower: "M-16 -16Q0 -24 4 -6Q22 -16 18 4Q6 8 18 18Q4 28 -2 10Q-18 24 -18 6Q-8 0 -16 -16Z",
  star: "M0 -36L10 -12 34 -8 18 10 22 34 0 24 -22 34 -18 10 -34 -8 -10 -12Z",
  trend: "M-36 19L-12 -5 6 7 36 -17M14 -17L38 -20 37 2",
  trendUp: "M-28 32L-12 0 8 10 26 -28M6 -24L26 -32 32 -12",
  heart: "M0 32C-42 6 -52 -18 -34 -32Q-14 -40 0 -22Q16 -40 36 -30C52 -10 40 8 0 32Z",
  heartS: "M0 28C-34 4 -40 -12 -28 -22Q-12 -28 0 -12Q12 -28 28 -20C40 -8 32 8 0 28Z",
  receipt: "M-54 -34q8 4 10 -4q8 4 12 -4q8 4 12 -4q8 4 12 -4q8 4 12 -4q6 2 20 -8L54 36q-8 -2 -10 6q-8 -4 -12 4q-8 -4 -12 4q-8 -4 -12 4q-8 -4 -12 4q-8 -4 -20 2ZM-28 -14L16 -28M-22 6L26 -8M-16 28L32 12",
  coin: "M-60 -14H58A14 14 0 0 1 58 14H-60A14 14 0 0 1 -60 -14Z"
}

class ChatWallpaper extends HTMLElement {
  constructor() {
    super()
    this.attachShadow({ mode: "open" })
    const drawing = sheets.map(s => `
      <g transform="translate(${s.at})">
        ${s.circles.map(([x, y, r]) => `<circle cx="${x}" cy="${y}" r="${r}"/>`).join("")}
        ${s.stamps.map(([name, x, y]) => `<path transform="translate(${x} ${y})" d="${stamps[name]}"/>`).join("")}
        <path d="${s.paths}"/>
      </g>`).join("")
    this.shadowRoot.innerHTML = `
      <style>
        /* sits behind the messages */
        :host { position: absolute; inset: 0; overflow: hidden; }
        svg { display: block; width: 100%; height: 100%; }
      </style>
      <svg viewBox="0 519 2217 3834" preserveAspectRatio="xMinYMin slice" fill="none" stroke="#232323" stroke-width="5" stroke-linecap="round" stroke-linejoin="round" aria-hidden="true">${drawing}</svg>
    `
  }
}

customElements.define("chat-wallpaper", ChatWallpaper)
customElements.define("status-bar", StatusBar)
customElements.define("chat-header", ChatHeader)
customElements.define("chat-message", ChatMessage)
customElements.define("chat-document", ChatDocument)
customElements.define("chat-composer", ChatComposer)
customElements.define("chat-screen", ChatScreen)
</script>
</body>
</html>
